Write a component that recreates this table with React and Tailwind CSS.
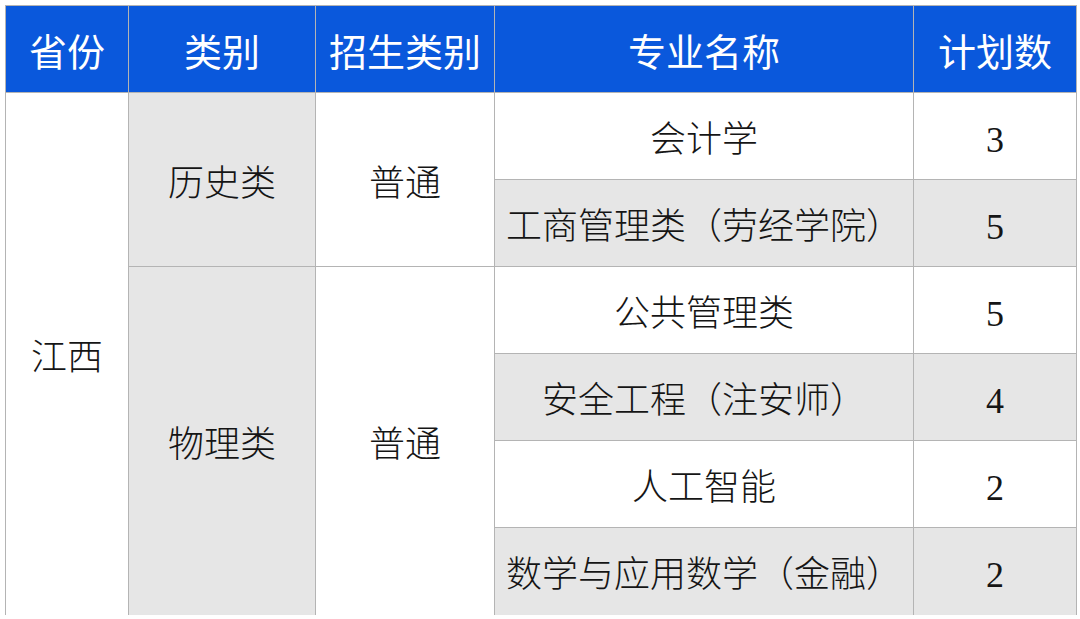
const rows = [
  { name: "会计学", count: "3", grey: false },
  { name: "工商管理类（劳经学院）", count: "5", grey: true },
  { name: "公共管理类", count: "5", grey: false },
  { name: "安全工程（注安师）", count: "4", grey: true },
  { name: "人工智能", count: "2", grey: false },
  { name: "数学与应用数学（金融）", count: "2", grey: true },
];

const cell = "border border-[#b4b4b4] text-center align-middle p-0";
const bc = cell + " pt-[8px]";
const body = "font-['Liberation_Serif','Noto_Sans_CJK_SC',serif] text-[36px] font-light text-[#151515]";

export default function App() {
  return (
    <div className="w-[1080px] h-[619px] bg-white overflow-hidden pt-[5px] pl-[5px]">
      <table className="table-fixed border-collapse w-[1071px]">
        <colgroup>
          <col className="w-[123px]" />
          <col className="w-[187px]" />
          <col className="w-[179px]" />
          <col className="w-[419px]" />
          <col className="w-[163px]" />
        </colgroup>
        <thead>
          <tr className="h-[87px] bg-[#0a58dc] text-white font-['Noto_Sans_CJK_SC',sans-serif] text-[38px]">
            <th className={cell + " font-normal"}>省份</th>
            <th className={cell + " font-normal"}>类别</th>
            <th className={cell + " font-normal"}>招生类别</th>
            <th className={cell + " font-normal"}>专业名称</th>
            <th className={cell + " font-normal"}>计划数</th>
          </tr>
        </thead>
        <tbody className={body}>
          {rows.map((r, i) => (
            <tr key={r.name} className="h-[87px]">
              {i === 0 && (
                <td rowSpan={6} className={bc + " bg-white border-b-0"}>江西</td>
              )}
              {i === 0 && (
                <td rowSpan={2} className={bc + " bg-[#e6e6e6]"}>历史类</td>
              )}
              {i === 0 && (
                <td rowSpan={2} className={bc + " bg-white"}>普通</td>
              )}
              {i === 2 && (
                <td rowSpan={4} className={bc + " bg-[#e6e6e6] border-b-0"}>物理类</td>
              )}
              {i === 2 && (
                <td rowSpan={4} className={bc + " bg-white border-b-0"}>普通</td>
              )}
              <td className={bc + (r.grey ? " bg-[#e6e6e6]" : " bg-white") + (i === 5 ? " border-b-0" : "")}>
                {r.name}
              </td>
              <td className={bc + (r.grey ? " bg-[#e6e6e6]" : " bg-white") + (i === 5 ? " border-b-0" : "")}>
                {r.count}
              </td>
            </tr>
          ))}
        </tbody>
      </table>
    </div>
  );
}
